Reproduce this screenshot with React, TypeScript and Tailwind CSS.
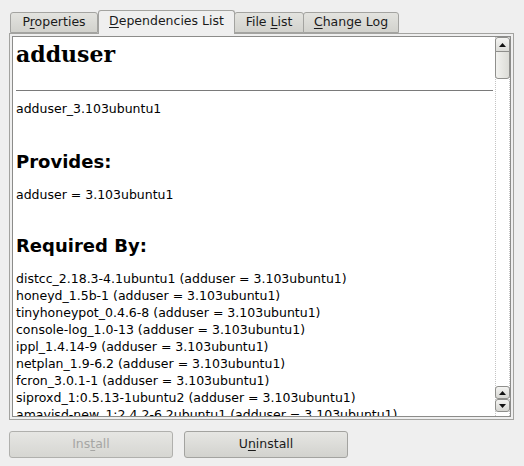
import React from 'react'

const ui = { fontFamily: '"DejaVu Sans", "Liberation Sans", sans-serif' }

const requiredBy = [
  'distcc_2.18.3-4.1ubuntu1 (adduser = 3.103ubuntu1)',
  'honeyd_1.5b-1 (adduser = 3.103ubuntu1)',
  'tinyhoneypot_0.4.6-8 (adduser = 3.103ubuntu1)',
  'console-log_1.0-13 (adduser = 3.103ubuntu1)',
  'ippl_1.4.14-9 (adduser = 3.103ubuntu1)',
  'netplan_1.9-6.2 (adduser = 3.103ubuntu1)',
  'fcron_3.0.1-1 (adduser = 3.103ubuntu1)',
  'siproxd_1:0.5.13-1ubuntu2 (adduser = 3.103ubuntu1)',
  'amavisd-new_1:2.4.2-6.2ubuntu1 (adduser = 3.103ubuntu1)',
]

function Tab({ pre, key1, post, active, width }: { pre: string; key1: string; post: string; active?: boolean; width: number }) {
  return (
    <div
      style={{ width }}
      className={
        active
          ? 'h-[24px] -mb-px z-10 flex items-center justify-center rounded-t-[3px] border border-b-0 border-[#a3a3a0] bg-[#efefef] text-[12.5px] text-[#1a1a1a]'
          : 'h-[21px] flex items-center justify-center rounded-t-[3px] border border-[#a3a3a0] bg-gradient-to-b from-[#e3e3df] to-[#d2d2cd] text-[12.5px] text-[#1a1a1a] -ml-px first:ml-0'
      }
    >
      <span className={active ? 'pb-[2px]' : ''}>
        {pre}
        <span className="underline underline-offset-2">{key1}</span>
        {post}
      </span>
    </div>
  )
}

function ArrowBtn({ up }: { up?: boolean }) {
  return (
    <div className="h-[13px] w-[15px] flex items-center justify-center rounded-[3px] border border-[#8f8f8c] bg-gradient-to-b from-[#f4f4f2] to-[#d6d6d2]">
      <svg width="7" height="4" viewBox="0 0 7 4">
        {up ? <polygon points="3.5,0 7,4 0,4" fill="#111" /> : <polygon points="0,0 7,0 3.5,4" fill="#111" />}
      </svg>
    </div>
  )
}

export default function App() {
  return (
    <div className="w-[524px] h-[466px] bg-[#efefef] flex flex-col overflow-hidden" style={ui}>
      <div className="flex items-end pl-[10px] pt-[10px]">
        <Tab pre="P" key1="r" post="operties" width={88} />
        <Tab pre="" key1="D" post="ependencies List" active width={137} />
        <Tab pre="File " key1="L" post="ist" width={70} />
        <Tab pre="" key1="C" post="hange Log" width={96} />
      </div>

      <div className="ml-[9px] w-[505px] h-[387px] border border-[#a3a3a0] p-[2px] bg-[#efefef]">
        <div className="h-full flex border border-[#8c8c8a] bg-white">
          <div className="flex-1 overflow-hidden pl-[3px] pr-[2px]">
            <div
              className="mt-[3px] h-[28px] leading-[28px] text-[22px] font-bold text-black"
              style={{ fontFamily: '"DejaVu Serif", "Liberation Serif", serif' }}
            >
              adduser
            </div>
            <div className="mt-[22px] h-px bg-[#7a7a7a]" />
            <div className="mt-[9px] text-[12.5px] leading-[17px] text-black">adduser_3.103ubuntu1</div>
            <div className="mt-[33px] text-[18px] leading-[24px] font-bold text-black">Provides:</div>
            <div className="mt-[12px] text-[12.5px] leading-[17px] text-black">adduser = 3.103ubuntu1</div>
            <div className="mt-[31px] text-[18px] leading-[24px] font-bold text-black">Required By:</div>
            <div className="mt-[12px] flex flex-col">
              {requiredBy.map((line) => (
                <div key={line} className="text-[12.5px] leading-[17px] text-black whitespace-nowrap">
                  {line}
                </div>
              ))}
            </div>
          </div>

          <div className="w-[15px] flex flex-col border-x border-dotted border-[#c4c4c4] bg-white">
            <div className="-mx-px">
              <div className="h-[15px] w-[15px] flex items-center justify-center rounded-t-[3px] border border-[#8f8f8c] bg-gradient-to-b from-[#f4f4f2] to-[#dcdcd8]">
                <svg width="7" height="4" viewBox="0 0 7 4">
                  <polygon points="3.5,0 7,4 0,4" fill="#111" />
                </svg>
              </div>
              <div className="-mt-px h-[28px] w-[15px] rounded-b-[3px] border border-[#8f8f8c] bg-gradient-to-r from-[#f2f2ef] to-[#dcdcd7]" />
            </div>
            <div className="flex-1" />
            <div className="-mx-px mb-[4px] flex flex-col">
              <ArrowBtn up />
              <ArrowBtn />
            </div>
          </div>
        </div>
      </div>

      <div className="flex gap-[11px] pl-[9px] mt-[11px]">
        <div className="w-[164px] h-[27px] flex items-center justify-center rounded-[3px] border border-[#b0b0ad] bg-gradient-to-b from-[#e6e6e3] to-[#d6d6d2] text-[12.5px] text-[#a6a6a4]">
          <span>
            Ins<span className="underline underline-offset-2">t</span>all
          </span>
        </div>
        <div className="w-[164px] h-[27px] flex items-center justify-center rounded-[3px] border border-[#a3a3a0] bg-gradient-to-b from-[#e6e6e3] to-[#d2d2ce] text-[12.5px] text-[#1a1a1a]">
          <span>
            U<span className="underline underline-offset-2">n</span>install
          </span>
        </div>
      </div>
    </div>
  )
}
